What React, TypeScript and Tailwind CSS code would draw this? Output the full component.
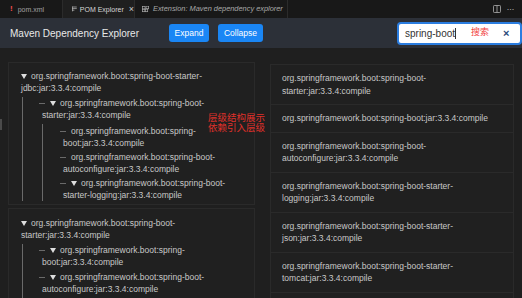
import React from "react";

const font = { fontFamily: '"Liberation Sans", "Noto Sans CJK SC", sans-serif' };

function Dash() {
  return <span className="inline-block align-middle w-[6px] h-px bg-[#6a6a6a] ml-[-3px] mr-[5px] mb-[1px]" />;
}
function Tri() {
  return (
    <svg width="6" height="5" viewBox="0 0 6 5" className="inline-block align-middle mr-[4px] mb-[1px]">
      <polygon points="0,0 6,0 3,5" fill="#dedede" />
    </svg>
  );
}

const rightRows = [
  "org.springframework.boot:spring-boot-starter:jar:3.3.4:compile",
  "org.springframework.boot:spring-boot:jar:3.3.4:compile",
  "org.springframework.boot:spring-boot-autoconfigure:jar:3.3.4:compile",
  "org.springframework.boot:spring-boot-starter-logging:jar:3.3.4:compile",
  "org.springframework.boot:spring-boot-starter-json:jar:3.3.4:compile",
  "org.springframework.boot:spring-boot-starter-tomcat:jar:3.3.4:compile",
  "org.springframework.boot:spring-boot-starter-web:jar:3.3.4:compile",
];

export default function App() {
  return (
    <div
      className="relative w-[522px] h-[298px] overflow-hidden bg-[#1f1f1f] text-[#c8c8c8]"
      style={font}
    >
      {/* Tab bar */}
      <div className="flex h-[18px] bg-[#181818] text-[7px] leading-none whitespace-nowrap">
        <div className="flex items-center w-[63px] pl-[10px] gap-[5px] border-r border-[#2b2b2b] text-[#a0a0a0]">
          <span className="text-[#f14c4c] font-bold text-[8px]">!</span>
          <span>pom.xml</span>
        </div>
        <div className="flex items-center w-[72px] pl-[9px] bg-[#1f1f1f] border-r border-[#2b2b2b] text-[#d6d6d6]">
          <svg width="6" height="6" viewBox="0 0 6 6" className="mr-[3px]">
            <path d="M0 0.5h6M0 2.5h6M0 4.5h3" stroke="#bbbbbb" strokeWidth="0.9" />
            <path d="M0.5 0v6" stroke="#bbbbbb" strokeWidth="0.9" />
          </svg>
          <span>POM Explorer</span>
          <span className="ml-[5px] text-[9px] text-[#cccccc]">×</span>
        </div>
        <div className="flex items-center w-[153px] pl-[7px] border-r border-[#2b2b2b] text-[#a8a8a8]">
          <svg width="7" height="7" viewBox="0 0 8 8" className="mr-[4px]">
            <rect x="0.5" y="3.5" width="3" height="3" fill="none" stroke="#aaaaaa" strokeWidth="0.8" />
            <rect x="3.5" y="3.5" width="3" height="3" fill="none" stroke="#aaaaaa" strokeWidth="0.8" />
            <rect x="0.5" y="0.5" width="3" height="3" fill="none" stroke="#aaaaaa" strokeWidth="0.8" />
            <rect x="4.6" y="0.2" width="3" height="3" fill="none" stroke="#aaaaaa" strokeWidth="0.8" />
          </svg>
          <span className="italic text-[7.4px]">Extension: Maven dependency explorer</span>
        </div>
        <div className="flex-1" />
        <div className="flex items-center gap-[6px] pr-[8px]">
          <svg width="8" height="8" viewBox="0 0 8 8">
            <rect x="0.5" y="0.5" width="7" height="7" rx="0.8" fill="none" stroke="#b0b0b0" strokeWidth="0.8" />
            <path d="M4 0.5v7" stroke="#b0b0b0" strokeWidth="0.8" />
          </svg>
          <span className="text-[#b0b0b0] text-[9px] tracking-[-0.5px]">···</span>
        </div>
      </div>

      {/* Header */}
      <div className="flex items-center h-[30px] bg-[#2c3038] pl-[10px]">
        <span className="w-[127px] text-[10px] text-[#e8e8e8] whitespace-nowrap">Maven Dependency Explorer</span>
        <button className="ml-[32px] w-[40px] h-[18px] rounded-[3px] bg-[#1a86f5] text-white text-[8.5px]">
          Expand
        </button>
        <button className="ml-[9px] w-[45px] h-[18px] rounded-[3px] bg-[#1a86f5] text-white text-[8.5px]">
          Collapse
        </button>
        <div className="ml-auto flex items-center w-[125px] h-[23px] rounded-[4px] border-2 border-[#2b7de0] bg-white pl-[6px]">
          <span className="text-[10px] text-[#333333]">spring-boot</span>
          <span className="w-px h-[11px] bg-[#333333]" />
          <span className="ml-[15px] text-[9px] text-[#f23c3c]">搜索</span>
          <span className="ml-[14px] text-[11px] font-bold text-[#2a4a7a] leading-none">×</span>
        </div>
      </div>

      {/* Body */}
      <div className="flex pl-[8px] pt-[14px] gap-[15px]">
        {/* Left column */}
        <div className="w-[247px] flex flex-col gap-[3px] text-[8.5px] leading-[12px]">
          <div className="border border-[#2a2a2a] bg-[#202020] pl-[12px] pr-[12px] pt-[7px] pb-[3px]">
            <div><Tri />org.springframework.boot:spring-boot-starter-jdbc:jar:3.3.4:compile</div>
            <div className="mt-[3px] ml-[1px] border-l border-[#6a6a6a] pl-[19px] flex flex-col gap-[3px]">
              <div><Dash /><Tri />org.springframework.boot:spring-boot-starter:jar:3.3.4:compile</div>
              <div className="border-l border-[#6a6a6a] pl-[20px] pt-[1px] flex flex-col gap-[2px]">
                <div><Dash />org.springframework.boot:spring-boot:jar:3.3.4:compile</div>
                <div><Dash />org.springframework.boot:spring-boot-autoconfigure:jar:3.3.4:compile</div>
                <div><Dash /><Tri />org.springframework.boot:spring-boot-starter-logging:jar:3.3.4:compile</div>
              </div>
            </div>
          </div>
          <div className="border border-[#2a2a2a] bg-[#202020] pl-[12px] pr-[12px] pt-[8px] pb-[3px]">
            <div><Tri />org.springframework.boot:spring-boot-starter:jar:3.3.4:compile</div>
            <div className="mt-[3px] ml-[1px] border-l border-[#6a6a6a] pl-[19px] flex flex-col gap-[3px]">
              <div><Dash /><Tri />org.springframework.boot:spring-boot:jar:3.3.4:compile</div>
              <div><Dash /><Tri />org.springframework.boot:spring-boot-autoconfigure:jar:3.3.4:compile</div>
              <div><Dash />org.springframework.boot:spring-boot-starter-logging:jar:3.3.4:compile</div>
            </div>
          </div>
        </div>

        {/* Right column */}
        <div className="w-[244px] mt-[2px] flex flex-col text-[8.5px] leading-[12.5px]">
          {rightRows.map((r, i) => (
            <div
              key={i}
              className="border border-[#2a2a2a] -mt-px first:mt-0 bg-[#202020] px-[11px] py-[7px]"
            >
              {r}
            </div>
          ))}
        </div>
      </div>

      {/* left edge sash */}
      <div className="absolute left-0 top-[119px] w-[2px] h-[11px] bg-[#4a4a4a]" />

      {/* annotation */}
      <div className="absolute left-[208px] top-[113px] text-[9.5px] leading-[9.5px] text-[#e0302a]">
        <div>层级结构展示</div>
        <div>依赖引入层级</div>
      </div>
    </div>
  );
}
